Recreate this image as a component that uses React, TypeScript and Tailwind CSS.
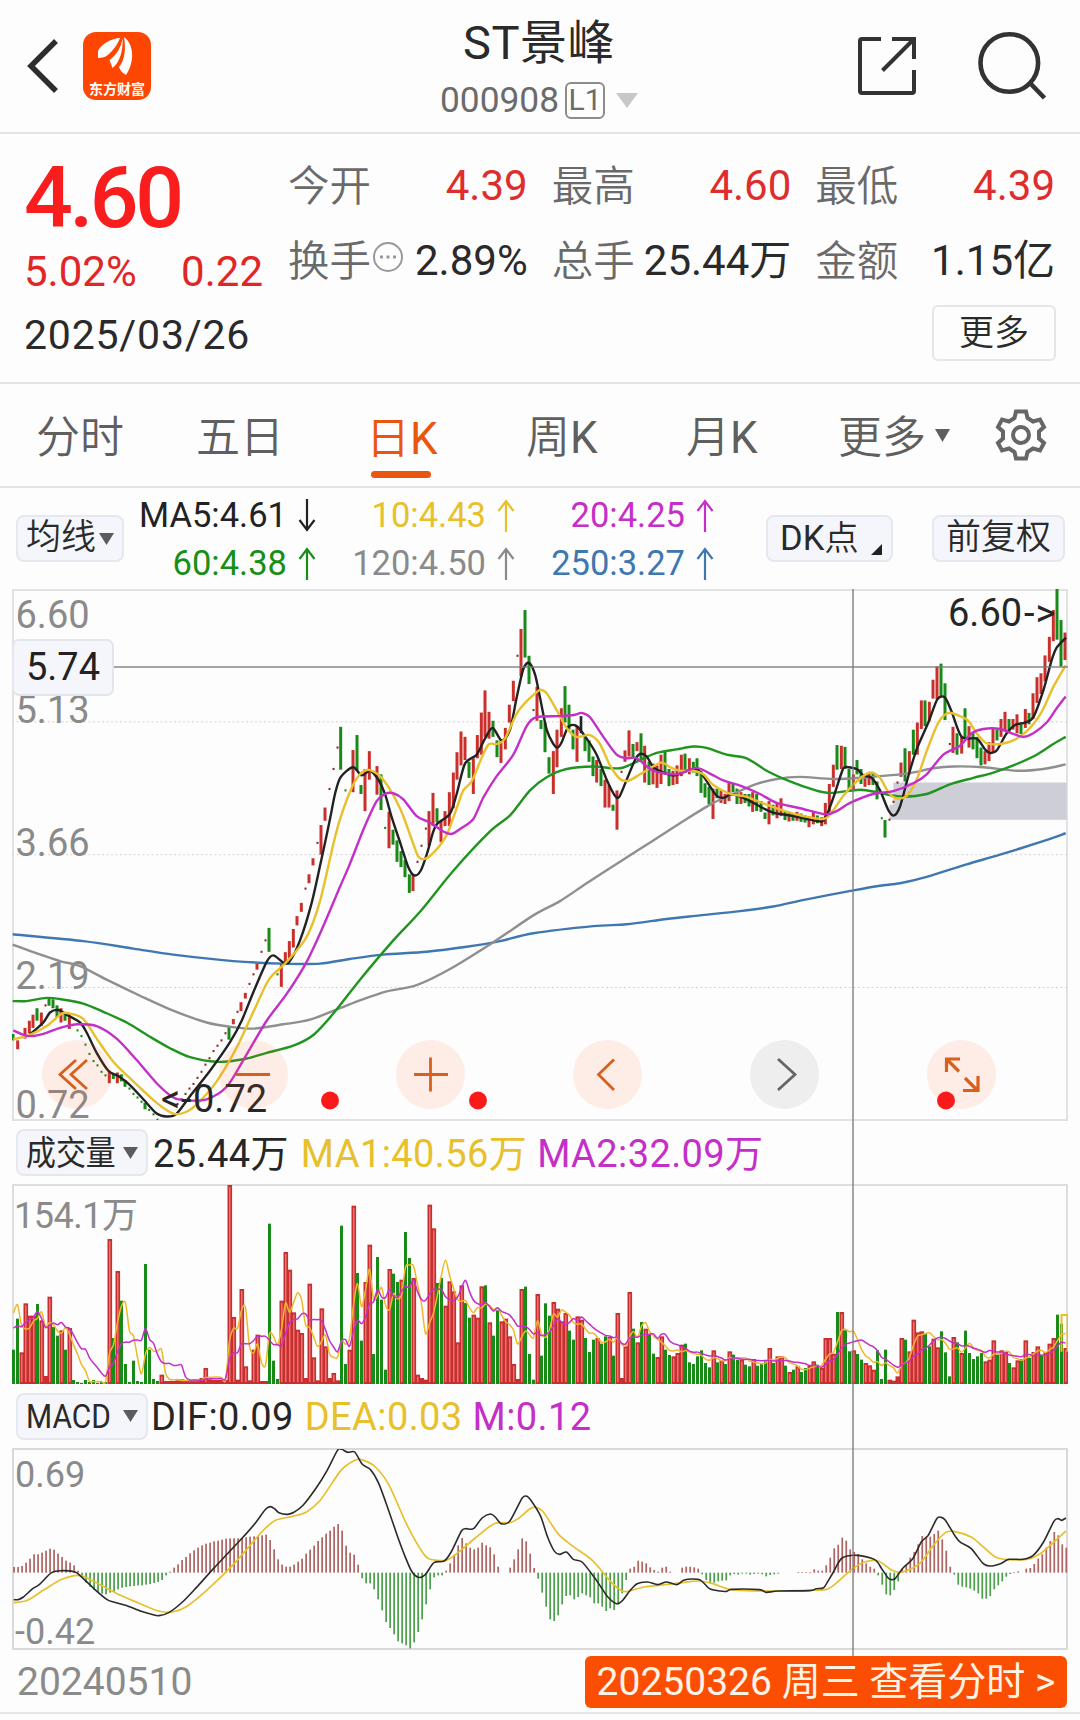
import type { ReactNode } from "react";

type Point = [number, number];

const RED = "#c9302c";
const GREEN = "#178a17";
const YELLOW = "#e8c02c";
const MAGENTA = "#c42fc8";

// "x,y x,y ..." -> list of points
const parse = (src: string): Point[] =>
  src
    .trim()
    .split(/\s+/)
    .map((p) => p.split(",").map(Number) as Point);

// Catmull-Rom spline through all the points
const smooth = (pts: Point[]) => {
  let d = `M${pts[0][0]} ${pts[0][1]}`;
  for (let i = 0; i < pts.length - 1; i++) {
    const a = pts[i - 1] ?? pts[i];
    const b = pts[i];
    const c = pts[i + 1];
    const e = pts[i + 2] ?? c;
    d += `C${b[0] + (c[0] - a[0]) / 7} ${b[1] + (c[1] - a[1]) / 7} ${c[0] - (e[0] - b[0]) / 7} ${c[1] - (e[1] - b[1]) / 7} ${c[0]} ${c[1]}`;
  }
  return d;
};

/* ---------- K line data: x, high, low ---------- */

const upCandles =
  "53,1290,1315 75,1255,1285 88,1235,1270 99,1218,1255 124,1212,1250 183,1200,1240 208,1215,1258 328,1375,1410 352,1380,1410 700,1230,1245 723,1183,1208 736,1157,1173 771,1075,1092 844,1075,1140 856,1043,1075 868,1012,1060 880,978,1030 891,942,968 904,905,930 927,825,850 939,780,800 963,687,770 975,638,675 1059,477,595 " +
  "1095,530,648 1108,480,560 1131,522,602 1167,650,752 1239,825,872 1287,648,745 1299,597,690 1323,675,735 1335,648,690 1348,595,690 1360,540,640 1371,483,560 1383,425,520 1395,440,505 1420,500,600 1432,435,500 1444,372,490 1455,310,440 1467,370,445 1503,450,513 1516,415,475 1528,350,400 1540,283,340 1563,138,270 1611,300,395 1660,480,600 1671,420,525 1684,360,440 1731,410,510 1790,505,568 1815,560,638 1827,575,638 1851,590,700 1875,478,510 1887,422,495 1911,455,480 1934,465,568 1959,515,573 1971,520,583 1983,490,572 2019,535,575 2031,520,572 2044,490,550 2068,500,545 2139,585,670 " +
  "2163,590,625 2175,600,628 2187,567,620 2223,595,628 2258,595,650 2307,620,685 2331,625,668 2343,612,662 2367,650,677 2391,650,675 2427,662,693 2440,650,685 2465,665,690 2476,625,685 2488,572,650 2500,518,580 2524,465,530 2560,545,590 2595,545,580 2607,540,575 2703,512,552 2728,480,545 2752,400,490 2764,338,418 2788,342,395 2799,280,333 2811,243,335 2859,412,485 2885,440,487 2907,410,470 2955,480,517 2967,455,508 2979,418,485 3003,390,440 3015,370,425 3039,390,420 3051,377,430 3076,362,415 3099,318,390 3111,273,345 3123,262,320 3135,212,285 3148,160,230 3160,85,172 3195,148,225";

const downCandles =
  "39,1272,1290 111,1200,1235 147,1172,1193 159,1175,1200 171,1192,1225 195,1213,1235 340,1385,1398 364,1385,1405 375,1402,1420 435,1465,1483 687,1250,1288 807,975,1042 1022,412,532 1071,435,535 " +
  "1083,575,600 1143,545,645 1179,700,742 1191,730,790 1203,760,805 1215,785,833 1228,825,877 1311,640,680 1407,510,555 1479,395,440 1491,450,497 1575,85,218 1587,213,292 1623,393,418 1635,400,483 1647,497,543 1695,298,400 1707,350,420 1719,420,475 1755,440,480 1767,450,510 1779,495,550 1803,530,578 1839,630,647 1899,460,500 1923,430,510 1947,510,575 1995,480,545 2007,530,578 2055,487,540 2080,510,540 2091,500,550 2103,535,597 2115,570,610 2127,580,628 " +
  "2151,585,612 2199,570,595 2211,585,628 2235,600,625 2247,600,635 2270,600,648 2283,620,650 2295,652,670 2319,630,660 2355,650,673 2379,655,675 2403,655,678 2415,660,680 2452,660,682 2511,463,532 2535,468,530 2547,530,590 2571,505,545 2583,530,572 2619,540,575 2631,565,615 2655,673,722 2715,472,565 2740,420,490 2775,338,410 2823,235,325 2835,290,393 2871,430,490 2895,360,445 2919,430,475 2931,440,500 2943,470,520 2991,420,450 3027,390,430 3063,405,432 3087,373,405 3171,26,168 3183,113,243";

// one-price days, open = high = low = close
const upDots =
  "532,1468 544,1455 556,1440 568,1425 580,1412 592,1395 604,1378 616,1358 628,1340 640,1320 652,1305 664,1290 676,1270 712,1210 748,1132 760,1105 784,1042 796,1010 916,865 952,737 988,586 1000,530 1012,470 136,1192 1252,790 1264,745 1277,697 1552,213 1600,365 1864,538 2668,672 2680,622 2692,568 2849,460";
const downDots =
  "232,1262 244,1278 256,1302 268,1328 280,1348 292,1360 304,1378 316,1388 388,1425 400,1440 412,1450 424,1462 447,1485 460,1497 472,1512 832,1105 1036,590 1155,695 2645,668";

const priceLines = [
  {
    color: "#3f77b0",
    pts: "38,993 250,1012 400,1033 520,1050 700,1068 850,1075 960,1075 1050,1062 1150,1050 1280,1042 1400,1028 1500,1012 1600,990 1780,970 1880,965 2000,950 2100,940 2220,928 2320,915 2420,895 2560,870 2640,857 2700,850 2780,832 2900,797 3000,770 3120,735 3197,710",
  },
  {
    color: "#8f8f8f",
    pts: "38,1022 100,1043 180,1068 240,1082 320,1120 420,1165 510,1203 620,1240 700,1253 760,1257 850,1245 930,1232 1020,1200 1080,1178 1160,1153 1250,1135 1350,1090 1480,1015 1600,940 1680,900 1760,850 1860,790 1960,730 2060,670 2140,625 2200,600 2260,575 2330,558 2400,552 2500,558 2600,553 2720,543 2800,528 2860,523 2950,525 3050,535 3130,530 3197,517",
  },
  {
    color: "#1f941f",
    pts: "38,1180 80,1180 140,1171 190,1176 250,1187 310,1210 380,1240 450,1280 510,1312 570,1337 650,1350 730,1343 800,1325 880,1305 940,1275 1000,1215 1080,1120 1180,1010 1260,930 1360,815 1470,705 1530,660 1590,590 1640,553 1700,530 1780,523 1860,528 1920,505 1970,485 2030,475 2080,467 2120,471 2180,490 2240,500 2300,535 2370,565 2440,588 2490,597 2580,588 2640,597 2700,607 2780,600 2850,573 2920,555 2980,540 3040,520 3110,490 3160,460 3197,440",
  },
  {
    color: "#222222",
    pts: "88,1275 130,1240 150,1212 175,1205 200,1218 240,1240 260,1268 290,1325 325,1375 355,1390 390,1415 430,1455 470,1495 500,1503 530,1495 575,1440 630,1375 690,1295 725,1235 760,1155 800,1070 820,1052 850,1072 868,1070 900,1010 935,905 965,780 990,670 1005,600 1022,553 1059,525 1085,548 1110,535 1135,560 1155,600 1175,665 1200,735 1225,805 1243,828 1262,815 1280,770 1300,705 1312,683 1350,655 1370,600 1395,515 1430,490 1455,445 1478,415 1505,450 1530,420 1550,330 1570,250 1587,233 1605,265 1620,330 1640,420 1660,460 1673,470 1685,455 1705,412 1730,410 1760,445 1790,490 1820,560 1845,605 1858,608 1880,560 1905,505 1920,488 1940,495 1960,525 1990,540 2025,548 2060,535 2090,530 2110,550 2150,605 2175,610 2195,600 2240,615 2290,640 2320,652 2380,662 2430,672 2465,677 2480,660 2500,610 2525,540 2535,525 2570,530 2590,548 2615,555 2640,590 2665,645 2682,660 2700,635 2725,550 2750,475 2785,400 2812,335 2835,330 2855,370 2885,440 2930,445 2955,475 2970,485 2990,478 3020,430 3045,407 3075,400 3100,385 3130,310 3155,225 3170,190 3198,162",
  },
  {
    color: YELLOW,
    pts: "40,1287 88,1275 140,1250 185,1215 210,1215 250,1230 290,1285 340,1350 400,1405 470,1465 520,1495 560,1490 600,1460 650,1405 710,1310 760,1210 800,1130 820,1105 860,1070 920,1000 960,900 1000,740 1022,665 1059,575 1085,540 1110,533 1150,560 1200,640 1240,740 1255,775 1275,782 1310,755 1340,715 1370,640 1390,590 1415,565 1440,510 1465,462 1490,460 1515,445 1550,375 1575,345 1610,315 1622,308 1640,318 1670,365 1700,415 1730,440 1770,435 1800,460 1830,520 1860,558 1885,563 1920,545 1950,528 1985,512 2010,525 2040,535 2080,535 2110,545 2140,575 2190,600 2240,608 2300,630 2380,655 2470,670 2500,645 2530,605 2570,565 2610,540 2640,555 2665,595 2690,612 2720,605 2750,560 2780,480 2815,400 2845,373 2875,380 2905,395 2930,430 2960,458 3000,460 3040,450 3085,420 3125,370 3160,300 3197,240",
  },
  {
    color: MAGENTA,
    pts: "40,1262 85,1278 130,1272 180,1255 235,1245 290,1250 350,1285 410,1345 470,1410 520,1450 560,1458 620,1455 680,1420 730,1345 800,1235 860,1160 920,1070 970,970 1020,860 1050,795 1090,700 1130,620 1155,600 1180,598 1210,615 1250,662 1290,680 1330,705 1355,712 1385,695 1420,670 1450,610 1490,550 1540,490 1580,410 1610,385 1680,382 1725,378 1745,373 1770,385 1810,440 1850,490 1880,500 1910,500 1960,535 2030,545 2090,527 2140,548 2170,562 2230,580 2280,600 2330,625 2400,640 2475,657 2510,648 2550,625 2620,600 2680,592 2740,570 2780,545 2830,490 2880,465 2915,430 2950,418 3000,418 3040,432 3070,440 3100,430 3140,400 3170,360 3197,327",
  },
];

/* ---------- volume: r = up, g = down, then bar height ---------- */

const volumes =
  "g103 g196 r95 r242 r205 r205 g240 r191 r24 r262 g171 g145 r161 g103 r168 g12 g6 g3 g12 g6 g12 g3 g6 g6 r435 g138 r339 g250 g60 g6 g70 g9 g6 g360 g103 g15 g9 r28 r9 r9 r9 r11 r14 r11 r9 r9 r11 r18 r48 r14 r12 r12 r12 r12 r597 r201 r13 r285 r53 r11 r103 r148 r9 r9 g481 g70 g15 r250 r396 r343 r215 r163 r153 r18 r301 r80 r11 r227 r113 r18 r33 r11 g475 g60 r103 r535 g333 g130 r306 r418 g90 g381 g253 g43 r345 g331 g306 r313 g456 g378 r318 r28 r18 r13 r538 r467 g303 g318 r235 r308 r278 r125 r296 g243 g199 r208 r199 r293 g296 r185 g145 g221 r188 r196 r143 r60 r15 r285 g292 g90 g13 r270 " +
  "g85 g242 g205 r246 r226 r188 r213 g160 g133 r203 r193 g138 g96 g133 r138 g121 g143 r141 g85 r213 r18 r113 r276 g166 r125 g186 r166 g148 g91 r81 r143 g103 g87 r83 r93 r118 g121 g65 g60 g83 g101 g63 g50 r101 g65 r71 g60 r98 g88 g73 r73 g58 g53 r75 g55 g63 g68 r108 g63 r83 r83 g55 r36 g43 r53 g36 g48 r55 r68 g58 r48 r138 r138 r91 g216 r216 g161 g98 r101 g90 g73 r63 r56 r43 g101 g15 g103 r13 r10 r23 r138 g133 r98 r193 r155 r158 g150 g113 r136 r110 g158 g95 g23 r141 g125 r93 g160 g93 g75 g83 g93 r68 r73 r131 g88 r101 r96 g63 r50 r71 g75 r131 g78 r96 r113 g88 r96 r121 r138 g208 g181 r108";

const volumeBars = volumes.split(" ").map((v) => ({ up: v[0] === "r", h: Number(v.slice(1)) }));

// trading days before the first visible bar, only used by the averages
const earlierVolumes = [130, 123, 123, 110, 129, 71, 400, 300, 191];

const volumeAverage = (days: number): Point[] => {
  const all = [...earlierVolumes, ...volumeBars.map((b) => b.h)];
  return volumeBars.map((_, i) => {
    const end = i + earlierVolumes.length + 1;
    const sum = all.slice(Math.max(0, end - days), end).reduce((a, b) => a + b, 0);
    return [i * 4 + 1.5, 597 - sum / days];
  });
};

/* ---------- MACD ---------- */

const macd = [
  17, 17, 20, 30, 42, 55, 55, 60, 66, 72, 69, 57, 47, 36, 30, 22, 6, -12, -30, -42, -52, -58, -63, -65, -60, -57, -50, -45, -43, -41,
  -40, -38, -38, -36, -34, -31, -28, -22, -8, 3, 15, 25, 38, 47, 58, 67, 75, 82, 87, 90, 94, 96, 99, 102, 103, 103, 103, 104, 106, 108,
  109, 110, 112, 114, 98, 70, 40, 24, 18, 18, 24, 33, 42, 57, 69, 81, 95, 106, 117, 126, 138, 146, 126, 81, 60, 54, 24, -17, -32, -32,
  -50, -80, -113, -148, -166, -185, -206, -212, -218, -227, -209, -178, -140, -95, -50, -14, -8, -8, 6, 28, 54, 82, 104, 88, 75, 70, 75,
  90, 82, 76, 55, 18, 0, 0, 15, 40, 70, 103, 94, 57, 14, -18, -60, -102, -140, -145, -128, -95, -70, -68, -80, -73, -62, -68, -74, -92,
  -92, -102, -115, -107, -112, -95, -62, -22, 12, 18, 36, 33, 28, 16, 8, 3, 15, 18, 3, 0, 0, 15, 18, 18, 16, 12, -5, -22, -32, -30, -26,
  -24, -23, -8, -4, -6, -3, -3, -6, -4, -3, -5, -11, -7, -5, -3, 0, 0, 0, 0, 2, 2, 2, 2, 10, 6, 6, 22, 45, 73, 84, 105, 96, 70, 62, 56,
  40, 28, 18, 12, -8, -36, -65, -68, -52, -26, 12, 22, 45, 62, 85, 110, 108, 108, 116, 126, 100, 66, 18, -6, -36, -42, -44, -48, -54,
  -62, -78, -78, -70, -50, -38, -26, -12, -4, 2, 4, 0, 12, 14, 26, 42, 55, 75, 95, 122, 112, 85, 75,
];

const dif =
  "40,628 52,628 68,620 95,595 115,582 150,547 180,541 218,545 235,558 275,597 310,627 330,635 365,645 410,663 440,672 462,676 490,667 530,635 570,592 620,535 700,447 740,400 770,358 785,349 797,355 810,367 835,372 855,365 880,345 920,290 950,240 980,180 992,177 1010,186 1030,185 1052,222 1075,237 1100,280 1130,365 1155,440 1175,495 1195,542 1215,561 1235,553 1260,517 1290,512 1310,485 1340,422 1353,415 1375,415 1400,383 1424,371 1438,380 1455,400 1478,395 1500,355 1517,322 1530,318 1545,335 1570,378 1590,440 1610,483 1625,492 1645,485 1665,507 1690,515 1725,560 1745,590 1765,620 1790,640 1808,630 1830,600 1850,580 1880,575 1910,583 1935,575 1965,583 1985,570 2010,566 2035,570 2060,595 2090,602 2110,603 2125,597 2205,598 2225,606 2260,602 2350,601 2370,595 2390,593 2400,580 2420,545 2445,503 2490,495 2540,508 2560,535 2578,562 2588,568 2600,564 2620,535 2650,505 2675,455 2695,435 2720,385 2732,381 2745,390 2775,440 2790,457 2820,475 2855,520 2875,527 2905,520 2930,507 2970,507 3000,495 3030,455 3060,393 3072,385 3082,390 3095,383";
const dea =
  "40,637 80,630 130,597 180,567 230,555 270,572 340,610 400,637 460,662 500,665 540,650 600,600 680,520 760,425 800,390 850,378 890,365 930,330 990,240 1030,210 1050,208 1090,230 1130,285 1180,400 1220,475 1245,505 1295,510 1330,487 1380,443 1435,400 1480,397 1505,385 1545,352 1575,362 1620,430 1660,465 1720,510 1770,570 1800,598 1820,604 1870,590 1930,583 1980,577 2030,572 2070,580 2125,598 2225,602 2350,600 2400,597 2430,577 2470,540 2510,515 2550,512 2590,540 2620,545 2670,520 2710,465 2745,427 2770,423 2820,440 2850,465 2890,500 2920,507 2980,507 3020,490 3060,455 3095,422";

/* ---------- small pieces ---------- */

const Caret = ({ className }: { className: string }) => (
  <svg viewBox="0 0 16 13" preserveAspectRatio="none" className={className}>
    <path d="M0 0h16L8 13z" fill="currentColor" />
  </svg>
);

const Arrow = ({ down }: { down?: boolean }) => (
  <svg width="18" height="33" viewBox="0 0 18 33" fill="none" stroke="currentColor" strokeWidth="2.200" className={down ? "rotate-180" : ""}>
    <path d="M9 33V2M1.500 12L9 2l7.500 10" />
  </svg>
);

const Stat = ({ label, value, red, info }: { label: string; value: string; red?: boolean; info?: boolean }) => (
  <div className="flex h-[75px] items-center justify-between whitespace-nowrap">
    <span className="mt-[4px] -ml-[2px] flex items-center text-[41.500px] font-[350] text-[#6a6a6a]">
      {label}
      {info && (
        <svg width="32" height="32" viewBox="0 0 32 32" className="-mt-3 ml-px" fill="none" stroke="#999" strokeWidth="2">
          <circle cx="16" cy="16" r="14" />
          <path d="M8 16h3M14.500 16h3M21 16h3" strokeWidth="3" />
        </svg>
      )}
    </span>
    <span className={red ? "text-[42px] text-[#df2c2c]" : "text-[42px] text-[#2a2a2a]"}>{value}</span>
  </div>
);

const MaItem = ({ text, color, down }: { text: string; color: string; down?: boolean }) => (
  <div className={`flex h-12 items-center justify-end gap-[11px] whitespace-nowrap text-[34.500px] ${color}`}>
    <span className="mt-px">{text}</span>
    <Arrow down={down} />
  </div>
);

const Pill = ({ className, children }: { className: string; children: ReactNode }) => (
  <div className={`flex h-[47px] shrink-0 items-center rounded-lg border-2 border-[#e6e8f0] bg-[#f5f6fb] whitespace-nowrap text-[#2a2a2a] ${className}`}>
    {children}
  </div>
);

const RoundButton = ({ gray, children }: { gray?: boolean; children: ReactNode }) => (
  <div className={`flex size-[69px] items-center justify-center rounded-full ${gray ? "bg-[#888]/13 text-[#666]" : "bg-[#ff5a14]/10 text-[#d9601c]"}`}>
    <svg width="69" height="69" viewBox="0 0 69 69" fill="none" stroke="currentColor" strokeWidth="2.800">
      {children}
    </svg>
  </div>
);

/* ---------- page sections ---------- */

const Header = () => (
  <header className="flex h-[134px] shrink-0 items-start border-b-2 border-[#e4e4e4]">
    <svg width="36" height="60" viewBox="0 0 36 60" className="mt-[36px] ml-[25px]" fill="none" stroke="#2d2d2d" strokeWidth="5.500">
      <path d="M31 5L6 30l25 25" />
    </svg>
    <div className="mt-[32px] ml-[22px] flex size-[68px] flex-col items-center overflow-hidden rounded-[13px] bg-[#fc4602]">
      <svg width="68" height="46" viewBox="0 0 68 46" className="shrink-0" fill="#fff">
        <path d="M37 6C29 6 17 13 15 19v7c7 0 10-3 13-6 4-4 7-9 9-14z" />
        <path d="M39.500 6c-1 9-6 17-13 22l3 8c7-5 11-18 10-30z" />
        <path d="M41 5c2 12 1 23-5 30 1 3 3 6 7 8 9-13 8-31-2-38z" />
      </svg>
      <span className="mt-[4px] text-[14px] leading-[14px] font-bold whitespace-nowrap text-white">东方财富</span>
    </div>
    <div className="ml-[228px] flex w-[320px] flex-col items-center pt-[16px]">
      <h1 className="text-[47px] leading-[54px] tracking-[0.500px] text-[#2a2a2a]">ST景峰</h1>
      <div className="mt-[10px] flex h-[40px] items-center text-[35.300px] leading-[40px] text-[#6b6b6b]">
        000908
        <span className="ml-[6px] flex h-[37px] w-[40px] items-center justify-center rounded-[6px] border-2 border-[#8c8c8c] text-[30px] leading-none">L1</span>
        <Caret className="ml-[11px] h-[15px] w-[22px] text-[#c8c8c8]" />
      </div>
    </div>
    <svg width="62" height="62" viewBox="0 0 62 62" className="mt-[35px] ml-[157px]" fill="none" stroke="#333" strokeWidth="4">
      <path d="M25 4H6q-2 0-2 2v50q0 2 2 2h50q2 0 2-2V35M36 4h22v20M56.500 5.500L26.500 35.500" />
    </svg>
    <svg width="72" height="72" viewBox="0 0 72 72" className="mt-[31px] ml-[58px]" fill="none" stroke="#333" strokeWidth="4.600">
      <circle cx="33.300" cy="32" r="28.800" />
      <path d="M53.500 51.500l15 15.500" />
    </svg>
  </header>
);

const Quote = () => (
  <section className="flex h-[250px] shrink-0 border-b-2 border-[#e4e4e4]">
    <div className="w-[290px] shrink-0 pl-[24px]">
      <div className="mt-[19px] text-[86px] leading-[90px] font-medium tracking-[-3.500px] text-[#fa1d1d]">4.60</div>
      <div className="mt-[5px] flex w-[239px] justify-between text-[42px] leading-[48px] text-[#e02626]">
        <span>5.02%</span>
        <span>0.22</span>
      </div>
      <div className="mt-[15px] text-[41px] leading-[48px] tracking-[0.800px] whitespace-nowrap text-[#2a2a2a]">2025/03/26</div>
    </div>
    <div className="flex flex-1 flex-col">
      <div className="mt-[14px] grid w-[765px] grid-cols-3 gap-x-[26px]">
        <Stat label="今开" value="4.39" red />
        <Stat label="最高" value="4.60" red />
        <Stat label="最低" value="4.39" red />
        <Stat label="换手" value="2.89%" info />
        <Stat label="总手" value="25.44万" />
        <Stat label="金额" value="1.15亿" />
      </div>
      <button className="mt-[7px] ml-[642px] h-[56px] w-[124px] rounded-[6px] border-2 border-[#e6e6e6] text-[35px] leading-none font-[350] text-[#2a2a2a]">更多</button>
    </div>
  </section>
);

const Tabs = () => (
  <nav className="flex h-[104px] shrink-0 items-center border-b-2 border-[#e4e4e4] text-[44px] leading-none font-[350] whitespace-nowrap text-[#5f5f5f]">
    <span className="mt-[6px] ml-[36px] w-[160px]">分时</span>
    <span className="mt-[6px] w-[172px]">五日</span>
    <span className="flex h-full w-[158px] flex-col">
      <span className="mt-[33px] -ml-[2px] text-[#e8560f]">
        日<span className="font-normal">K</span>
      </span>
      <span className="mt-[10px] ml-[3px] h-[7px] w-[60px] rounded-full bg-[#e8560f]" />
    </span>
    <span className="mt-[6px] w-[160px]">
      周<span className="font-normal">K</span>
    </span>
    <span className="mt-[6px] w-[152px]">
      月<span className="font-normal">K</span>
    </span>
    <span className="mt-[6px]">更多</span>
    <Caret className="ml-[9px] h-[13px] w-[15px]" />
    <svg width="54" height="54" viewBox="-27 -27 54 54" className="ml-[44px]" fill="none" stroke="#666" strokeWidth="4">
      <path d="M-5-23.500H5L6.500-17l5.500 3.500 7-2 4 7.500-5 4.500v7l5 4.500-4 7.500-7-2L6.500 17 5 23.500H-5L-6.500 17l-5.500-3.500-7 2-4-7.500 5-4.500v-7l-5-4.500 4-7.500 7 2 5.500-3.500z" />
      <circle r="8" />
    </svg>
  </nav>
);

const Averages = () => (
  <section className="flex h-[101px] shrink-0">
    <Pill className="mt-[27px] ml-[16px] w-[108px] pl-[8px] text-[35px] font-[350]">
      均线
      <Caret className="ml-[3px] h-[12px] w-[15px] text-[#5c5c5c]" />
    </Pill>
    <div className="ml-[12px] grid w-[580px] grid-cols-[180px_199px_199px] content-start pt-[3px]">
      <MaItem text="MA5:4.61" color="text-[#222]" down />
      <MaItem text="10:4.43" color="text-[#e8c02c]" />
      <MaItem text="20:4.25" color="text-[#c42fc8]" />
      <MaItem text="60:4.38" color="text-[#178f17]" />
      <MaItem text="120:4.50" color="text-[#8a8a8a]" />
      <MaItem text="250:3.27" color="text-[#3f77b0]" />
    </div>
    <Pill className="mt-[27px] ml-[50px] w-[127px] pl-[12px] text-[34.500px]">
      DK<span className="font-[350]">点</span>
      <svg width="11" height="11" viewBox="0 0 11 11" className="mt-[22px] ml-[12px]">
        <path d="M11 0v11H0z" fill="#222" />
      </svg>
    </Pill>
    <Pill className="mt-[27px] ml-[39px] w-[133px] justify-center text-[35px] font-[350]">前复权</Pill>
  </section>
);

const Candles = ({ data, color }: { data: string; color: string }) => (
  <g fill={color}>
    {data.split(" ").map((c) => {
      const [x, top, bottom] = c.split(",").map(Number);
      return <rect key={c} x={x - 4.5} y={top} width={9} height={bottom - top} />;
    })}
  </g>
);

const Dots = ({ data, color }: { data: string; color: string }) => (
  <g fill={color}>
    {parse(data).map(([x, y]) => (
      <rect key={x} x={x - 2.5} y={y - 3} width={6} height={6} />
    ))}
  </g>
);

const PriceChart = () => (
  <section className="relative ml-[12px] h-[532px] w-[1056px] shrink-0 border-2 border-[#e2e2e2]">
    <svg viewBox="36 26 3168 1487" preserveAspectRatio="none" className="absolute -top-[2px] -left-[2px] h-[531px] w-[1056px]">
      <path d="M2680 568H3200V672H2668V630H2680z" fill="#cdced6" />
      <g stroke="#d4d4d4" strokeDasharray="2 2.500">
        <path d="M36 398H3204M36 770H3204M36 1142H3204" vectorEffect="non-scaling-stroke" />
      </g>
    </svg>
    <svg viewBox="12 589 1056 531" className="absolute -top-px -left-[2px] h-[531px] w-[1056px] overflow-visible text-[38px]" fill="#8a8a8a">
      <text x="15.500" y="627">6.60</text>
      <text x="15.500" y="722">5.13</text>
      <text x="15.500" y="855">3.66</text>
      <text x="15.500" y="988">2.19</text>
      <text x="15.500" y="1116.500">0.72</text>
    </svg>
    <svg viewBox="36 26 3168 1487" preserveAspectRatio="none" className="absolute -top-[2px] -left-[2px] h-[531px] w-[1056px]">
      <Candles data={upCandles} color={RED} />
      <Candles data={downCandles} color={GREEN} />
      <rect x="1739" y="382" width="8" height="48" fill="#222" />
      <Dots data={upDots} color="#8f2a22" />
      <Dots data={downDots} color={GREEN} />
      {priceLines.map((l) => (
        <path key={l.color} d={smooth(parse(l.pts))} fill="none" stroke={l.color} strokeWidth="2.400" vectorEffect="non-scaling-stroke" />
      ))}
    </svg>
    <svg viewBox="12 589 1056 531" className="absolute -top-px -left-[2px] h-[531px] w-[1056px] overflow-visible text-[38px]" fill="#262626">
      <text y="1111">
        <tspan x="161">&lt;</tspan>
        <tspan x="181">-</tspan>
        <tspan x="193">0.72</tspan>
      </text>
      <text y="624.500">
        <tspan x="948">6.60</tspan>
        <tspan x="1024">-</tspan>
        <tspan x="1035.500">&gt;</tspan>
      </text>
    </svg>
    <div className="absolute top-[449px] left-[28px] flex gap-[108px]">
      <RoundButton>
        <path d="M34 20L18 34.500 34 49M45 20L29 34.500 45 49" />
      </RoundButton>
      <RoundButton>
        <path d="M17 34.500h34" />
      </RoundButton>
      <RoundButton>
        <path d="M18 34.500h34M34.500 17.500v34" />
      </RoundButton>
      <RoundButton>
        <path d="M41 19.500L25.500 34.500 41 50" />
      </RoundButton>
      <RoundButton gray>
        <path d="M28 19L45 34.500 28 50" />
      </RoundButton>
      <RoundButton>
        <path d="M33 19H19.500v13M20 19.500l12 12M38 38l12 12M51 36v14.500H36" strokeWidth="3.200" />
      </RoundButton>
    </div>
    <svg viewBox="12 589 1056 531" className="absolute -top-[2px] -left-[2px] h-[531px] w-[1056px]" fill="#fb1a1a">
      <circle cx="330" cy="1100.500" r="9" />
      <circle cx="478" cy="1100.500" r="9" />
      <circle cx="946" cy="1100.500" r="9" />
    </svg>
  </section>
);

const IndicatorBar = ({ name, className, children }: { name: string; className: string; children: ReactNode }) => (
  <div className={`flex shrink-0 items-center text-[38px] leading-none whitespace-nowrap ${className}`}>
    <Pill className="ml-[16px] w-[132px] justify-between px-[8px] text-[34px]">
      <span className="w-[88px] origin-left scale-x-[0.88]">{name}</span>
      <Caret className="h-[12px] w-[15px] text-[#5c5c5c]" />
    </Pill>
    <div className="mt-[2px] flex tracking-[0.400px]">{children}</div>
  </div>
);

const VolumeChart = () => (
  <section className="relative ml-[12px] h-[200px] w-[1056px] shrink-0 border-2 border-[#dedede]">
    <svg viewBox="12 1185 1056 199" className="absolute -top-px -left-[2px] h-[199px] w-[1056px] text-[36px]" fill="#8a8a8a">
      <text x="14" y="1227.500" textLength="124">154.1万</text>
    </svg>
    <svg viewBox="0 0 1056 597" preserveAspectRatio="none" className="absolute -top-px -left-[2px] h-[199px] w-[1056px]">
      {volumeBars.map((b, i) => (
        <rect key={i} x={i * 4 + (b.up ? -0.5 : 0)} y={597 - b.h} width={b.up ? 4.6 : 3} height={b.h} fill={b.up ? "#c92f2f" : GREEN} />
      ))}
      {volumeBars.map(
        (b, i) => b.up && b.h > 24 && <rect key={i} x={i * 4 + 1.4} y={603 - b.h} width={0.9} height={b.h - 12} fill="#f3a3a0" />
      )}
      <path d="M1049.500 500V390h6v110" fill="none" stroke={YELLOW} strokeWidth="2" vectorEffect="non-scaling-stroke" />
      <path d={smooth(volumeAverage(5))} fill="none" stroke="#edb92a" strokeWidth="1.500" vectorEffect="non-scaling-stroke" />
      <path d={smooth(volumeAverage(10))} fill="none" stroke={MAGENTA} strokeWidth="1.500" vectorEffect="non-scaling-stroke" />
    </svg>
  </section>
);

const MacdChart = () => (
  <section className="relative ml-[12px] h-[202px] w-[1056px] shrink-0 border-2 border-[#dadada]">
    <svg viewBox="12 1449 1056 200" className="absolute -top-px -left-[2px] h-[200px] w-[1056px] overflow-visible text-[36px]" fill="#8a8a8a">
      <text x="15" y="1487">0.69</text>
      <text x="15" y="1644">-0.42</text>
    </svg>
    <svg viewBox="35 176 3066 600" preserveAspectRatio="none" className="absolute -top-px -left-[2px] h-[200px] w-[1056px]">
      {macd.map((v, i) => (
        <rect
          key={i}
          x={38.5 + i * 11.616}
          y={v > 0 ? 547 - v : 547}
          width={5}
          height={Math.abs(v)}
          fill={v > 0 ? "#ac6664" : "#4d9f4d"}
        />
      ))}
      <path d={smooth(parse(dea))} fill="none" stroke={YELLOW} strokeWidth="1.700" vectorEffect="non-scaling-stroke" />
      <path d={smooth(parse(dif))} fill="none" stroke="#2b2b2b" strokeWidth="1.600" vectorEffect="non-scaling-stroke" />
    </svg>
  </section>
);

export default function App() {
  return (
    <main className="flex h-[1720px] w-[1080px] flex-col overflow-hidden bg-[#fdfdfd] font-['Roboto','Noto_Sans_CJK_SC',sans-serif]">
      <Header />
      <Quote />
      <Tabs />
      <Averages />
      <div className="relative flex flex-col">
        <PriceChart />
        <IndicatorBar name="成交量" className="h-[63px]">
          <span className="ml-[5px] text-[#262626]">25.44万</span>
          <span className="ml-[12px] text-[#e8c02c]">MA1:40.56万</span>
          <span className="ml-[10px] text-[#c42fc8]">MA2:32.09万</span>
        </IndicatorBar>
        <VolumeChart />
        <IndicatorBar name="MACD" className="h-[64px]">
          <span className="ml-[3px] text-[#262626]">DIF:0.09</span>
          <span className="ml-[11px] text-[#e8c02c]">DEA:0.03</span>
          <span className="ml-[10px] text-[#c42fc8]">M:0.12</span>
        </IndicatorBar>
        <MacdChart />
        {/* crosshair */}
        <div className="absolute top-[77px] left-[12px] h-[1.500px] w-[1056px] bg-[#777]/65" />
        <div className="absolute top-0 left-[852px] h-[1067px] w-[2px] bg-[#777]/65" />
        <div className="absolute top-[50px] left-[12px] flex h-[57px] w-[102px] items-center justify-center rounded-[7px] border-2 border-[#e4e6ee] bg-[#f5f6fb] text-[38px] text-[#222]">
          5.74
        </div>
      </div>
      <footer className="relative flex h-[64px] shrink-0 items-start justify-between border-b-2 border-[#e6e6e6] pt-[6px] pr-[13px] pl-[17px] text-[39px] leading-[52px] whitespace-nowrap">
        <span className="text-[#8a8a8a]">20240510</span>
        <button className="flex h-[52px] w-[482px] items-center justify-center rounded-[6px] bg-[#fb4e02] text-[#fff3e6]">
          20250326 周三 查看分时 &gt;
        </button>
      </footer>
    </main>
  );
}
